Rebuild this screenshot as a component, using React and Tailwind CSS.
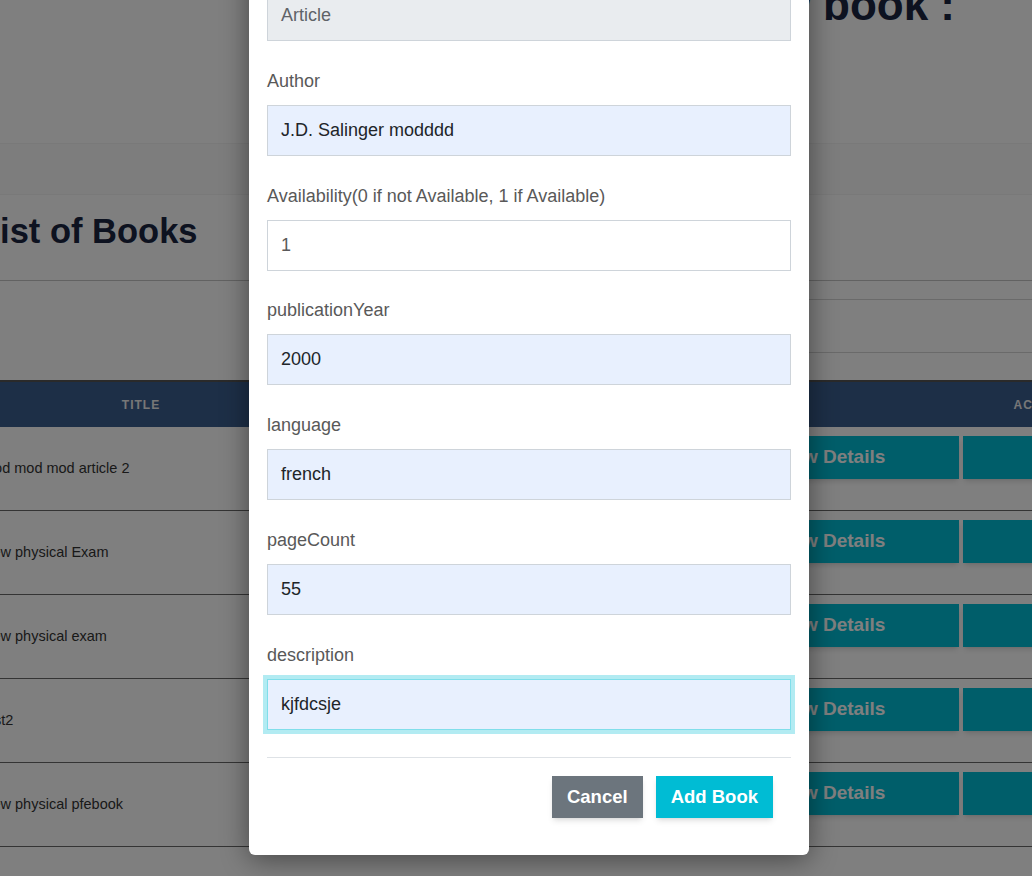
import React from 'react';

const books = [
  'mod mod mod article 2',
  'New physical Exam',
  'New physical exam',
  'test2',
  'New physical pfebook',
];

const fields = [
  { label: 'Type', value: 'Article', kind: 'disabled', gap: 'mb-[28px]' },
  { label: 'Author', value: 'J.D. Salinger modddd', kind: 'filled', gap: 'mb-[28px]' },
  { label: 'Availability(0 if not Available, 1 if Available)', value: '1', kind: 'plain', gap: 'mb-[27px]' },
  { label: 'publicationYear', value: '2000', kind: 'filled', gap: 'mb-[28px]' },
  { label: 'language', value: 'french', kind: 'filled', gap: 'mb-[28px]' },
  { label: 'pageCount', value: '55', kind: 'filled', gap: 'mb-[28px]' },
  { label: 'description', value: 'kjfdcsje', kind: 'focus', gap: 'mb-0' },
];

const inputStyles = {
  disabled: 'bg-[#e9ecef] border-[#ced4da] text-[#5f6368]',
  filled: 'bg-[#e8f0fe] border-[#ced4da] text-[#212529]',
  plain: 'bg-white border-[#ced4da] text-[#5a5a5a]',
  focus: 'bg-[#e8f0fe] border-[#80deea] text-[#212529] ring-4 ring-[#b2ebf2]',
};

const BookRow = ({ title }) => (
  <div className="flex h-[84px] border-b border-[#686868]">
    <div className="w-[318px] shrink-0 flex items-center text-[14.5px] text-[#333]">{title}</div>
    <div className="w-[390px] shrink-0" />
    <div className="flex items-start gap-[4px] pt-[9px] pl-[11px]">
      <button className="w-[258px] h-[43px] bg-[#00bcd4] text-white font-bold text-[19px] shadow-md">
        View Details
      </button>
      <button className="w-[258px] h-[43px] bg-[#00bcd4] text-white font-bold text-[19px] shadow-md">
        Edit
      </button>
    </div>
  </div>
);

const Field = ({ label, value, kind, gap }) => (
  <div className={gap}>
    <label className="block text-[18px] leading-6 text-[#595959] mb-[12px]">{label}</label>
    <div
      className={`h-[51px] border px-[13px] flex items-center text-[18px] ${inputStyles[kind]}`}
    >
      {value}
    </div>
  </div>
);

export default function App() {
  return (
    <div className="relative w-screen h-screen overflow-hidden bg-white font-['Liberation_Sans',Arial,sans-serif]">
      {/* page behind the modal */}
      <div className="w-[1500px]">
        <div className="w-[1032px] flex justify-end pr-[77px] mt-[-22px]">
          <h1 className="text-[44px] leading-[53px] font-bold text-[#1a2540]">Add a new book :</h1>
        </div>
        <div className="mt-[112px] h-[52px] w-[1032px] bg-[#fbfbfb] border-y border-[#f3f3f3]" />
        <h2 className="mt-[16px] ml-[-21px] text-[34.5px] leading-[41px] font-bold text-[#1a2540]">
          List of Books
        </h2>
        <div className="mt-[28px] h-px w-[1032px] bg-[#c4c4c4]" />
        <div className="mt-[18px] ml-[700px] w-[600px] h-[54px] border border-[#d4d4d4] bg-white" />
        <div className="mt-[27px] ml-[-18px]">
          <div className="flex h-[47px] bg-[#3b5f8e] border-t-2 border-[#555] text-[12px] font-bold tracking-[1px] text-[#eeeeee]">
            <div className="w-[318px] shrink-0 flex items-center justify-center">TITLE</div>
            <div className="w-[390px] shrink-0" />
            <div className="w-[708px] shrink-0 flex items-center justify-center">ACTIONS</div>
          </div>
          {books.map((b) => (
            <BookRow key={b} title={b} />
          ))}
        </div>
      </div>

      {/* overlay */}
      <div className="absolute inset-0 bg-black/50">
        <div className="absolute left-[249px] top-[-64px] w-[560px] bg-white rounded-md shadow-[0_4px_28px_rgba(0,0,0,0.45)] px-[18px] pt-[18px] pb-[37px]">
          {fields.map((f) => (
            <Field key={f.label} {...f} />
          ))}
          <div className="mt-[27px] h-px bg-[#dee2e6]" />
          <div className="mt-[18px] flex justify-end gap-[13px] pr-[18px]">
            <button className="h-[42px] px-[15px] bg-[#6c757d] text-white font-bold text-[18.5px] shadow-md">
              Cancel
            </button>
            <button className="h-[42px] px-[15px] bg-[#00bcd4] text-white font-bold text-[18.5px] shadow-md">
              Add Book
            </button>
          </div>
        </div>
      </div>
    </div>
  );
}
